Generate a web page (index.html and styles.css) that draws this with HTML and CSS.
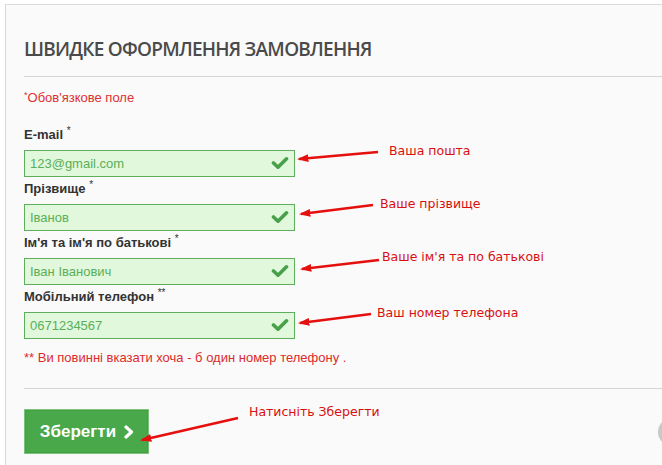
FILE: index.html
```html
<!DOCTYPE html>
<html lang="uk">
<head>
    <meta charset="UTF-8">
    <meta name="viewport" content="width=device-width, initial-scale=1.0">
    <title>Швидке оформлення замовлення</title>
    <link rel="stylesheet" href="styles.css">
</head>
<body>
    <div class="panel">
        <h2 class="title">Швидке оформлення замовлення</h2>
        <hr class="line">

        <p class="required"><sup>*</sup>Обов'язкове поле</p>

        <form id="formulario">
            <div class="campo">
                <label for="email">E-mail <sup>*</sup></label>
                <div class="caja">
                    <input type="text" id="email" value="123@gmail.com">
                    <svg class="ok" viewBox="0 0 18 14"><polyline points="2.5,7 7,11.2 15.5,2.8"/></svg>
                </div>
            </div>
            <div class="campo">
                <label for="apellido">Прізвище <sup>*</sup></label>
                <div class="caja">
                    <input type="text" id="apellido" value="Іванов">
                    <svg class="ok" viewBox="0 0 18 14"><polyline points="2.5,7 7,11.2 15.5,2.8"/></svg>
                </div>
            </div>
            <div class="campo">
                <label for="nombre">Ім'я та ім'я по батькові <sup>*</sup></label>
                <div class="caja">
                    <input type="text" id="nombre" value="Іван Іванович">
                    <svg class="ok" viewBox="0 0 18 14"><polyline points="2.5,7 7,11.2 15.5,2.8"/></svg>
                </div>
            </div>
            <div class="campo">
                <label for="telefono">Мобільний телефон <sup>**</sup></label>
                <div class="caja">
                    <input type="text" id="telefono" value="0671234567">
                    <svg class="ok" viewBox="0 0 18 14"><polyline points="2.5,7 7,11.2 15.5,2.8"/></svg>
                </div>
            </div>

            <p class="nota">** Ви повинні вказати хоча - б один номер телефону .</p>
            <hr class="line linea-baja">

            <button type="submit">Зберегти
                <svg class="flecha" viewBox="0 0 12 14"><polyline points="3,2 8.5,7 3,12"/></svg>
            </button>
        </form>
    </div>

    <!-- anotaciones -->
    <svg class="flechas" width="662" height="465">
        <defs>
            <marker id="punta" markerWidth="4.4" markerHeight="3" refX="3.6" refY="1.5" orient="auto">
                <polygon points="0,0 4.4,1.5 0,3" fill="#e5100e"/>
            </marker>
        </defs>
        <line x1="378" y1="152" x2="299" y2="159" marker-end="url(#punta)"/>
        <line x1="373" y1="205" x2="301" y2="214" marker-end="url(#punta)"/>
        <line x1="379" y1="260" x2="302" y2="269" marker-end="url(#punta)"/>
        <line x1="371" y1="314" x2="300" y2="323" marker-end="url(#punta)"/>
        <line x1="238" y1="418" x2="142" y2="440" marker-end="url(#punta)"/>
    </svg>
    <span class="nota-roja n1">Ваша пошта</span>
    <span class="nota-roja n2">Ваше прізвище</span>
    <span class="nota-roja n3">Ваше ім'я та по батькові</span>
    <span class="nota-roja n4">Ваш номер телефона</span>
    <span class="nota-roja n5">Натисніть Зберегти</span>

    <div class="arriba"></div>
</body>
</html>
```

FILE: styles.css
```css
html, body {
    overflow: hidden;
}

body {
    margin: 0;
    background-color: #ffffff;
    font-family: Arial, "Liberation Sans", sans-serif;
    position: relative;
    width: 662px;
    height: 465px;
}

.panel {
    margin: 4px 0 0 5px;
    border-top: 1px solid #d9d9d9;
    border-left: 1px solid #d9d9d9;
    background-color: #fafafa;
    padding: 30px 0 30px 18px;
    box-sizing: border-box;
    height: 470px;
}

.title {
    margin: 0;
    font-family: "Open Sans", sans-serif;
    font-weight: 600;
    font-size: 19px;
    letter-spacing: -0.75px;
    line-height: 28px;
    color: #4a4a4a;
    text-transform: uppercase;
}

.line {
    margin: 13px 0 0 0;
    border: none;
    border-top: 1px solid #d6d6d6;
    height: 0;
}

.required {
    margin: 13px 0 17px 0;
    font-size: 13px;
    line-height: 16px;
    color: #dd3030;
}

.required sup {
    font-size: 9px;
    vertical-align: 4px;
    line-height: 0;
}

.campo label {
    display: block;
    font-size: 13px;
    font-weight: bold;
    line-height: 18px;
    padding-top: 3px;
    color: #333333;
    margin-bottom: 6px;
}

.campo label sup {
    font-size: 10px;
    line-height: 0;
    vertical-align: 5px;
    font-weight: normal;
}

.caja {
    position: relative;
    width: 271px;
}

.caja input {
    display: block;
    width: 271px;
    height: 27px;
    box-sizing: border-box;
    padding: 0 30px 0 5px;
    border: 1px solid #5fae5c;
    background-color: #e1f8dd;
    color: #5aaf58;
    font-family: Arial, "Liberation Sans", sans-serif;
    font-size: 13px;
    outline: none;
}

.ok {
    position: absolute;
    right: 6px;
    top: 6px;
    width: 18px;
    height: 14px;
}

.ok polyline {
    fill: none;
    stroke: #48a04b;
    stroke-width: 3.6;
    stroke-linecap: round;
    stroke-linejoin: round;
}

.nota {
    margin: 11px 0 0 0;
    font-size: 13px;
    line-height: 16px;
    color: #dd2a2a;
}

.linea-baja {
    margin-top: 22px;
}

button {
    display: flex;
    align-items: center;
    justify-content: center;
    margin-top: 20px;
    width: 125px;
    height: 45px;
    background-color: #48a84a;
    border: 1px solid #7cc37c;
    box-shadow: inset 0 0 0 1px #43a043;
    color: #ffffff;
    font-family: Arial, "Liberation Sans", sans-serif;
    font-weight: bold;
    font-size: 17px;
    padding: 0 0 0 2px;
    cursor: pointer;
}

.flecha {
    width: 12px;
    height: 14px;
    margin-left: 7px;
}

.flecha polyline {
    fill: none;
    stroke: #ffffff;
    stroke-width: 3.2;
    stroke-linecap: round;
    stroke-linejoin: round;
}

.flechas {
    position: absolute;
    left: 0;
    top: 0;
    pointer-events: none;
}

.flechas line {
    stroke: #e5100e;
    stroke-width: 2.6;
}

.nota-roja {
    position: absolute;
    font-family: "DejaVu Sans", Verdana, sans-serif;
    font-size: 12.5px;
    line-height: 16px;
    color: #d80f0f;
    white-space: nowrap;
}

.n1 { left: 389px; top: 143px; }
.n2 { left: 380px; top: 196px; }
.n3 { left: 382px; top: 249px; }
.n4 { left: 377px; top: 305px; }
.n5 { left: 249px; top: 404px; }

.arriba {
    position: absolute;
    left: 658px;
    top: 418px;
    width: 28px;
    height: 28px;
    border-radius: 50%;
    background-color: #c9c9c9;
}
```
